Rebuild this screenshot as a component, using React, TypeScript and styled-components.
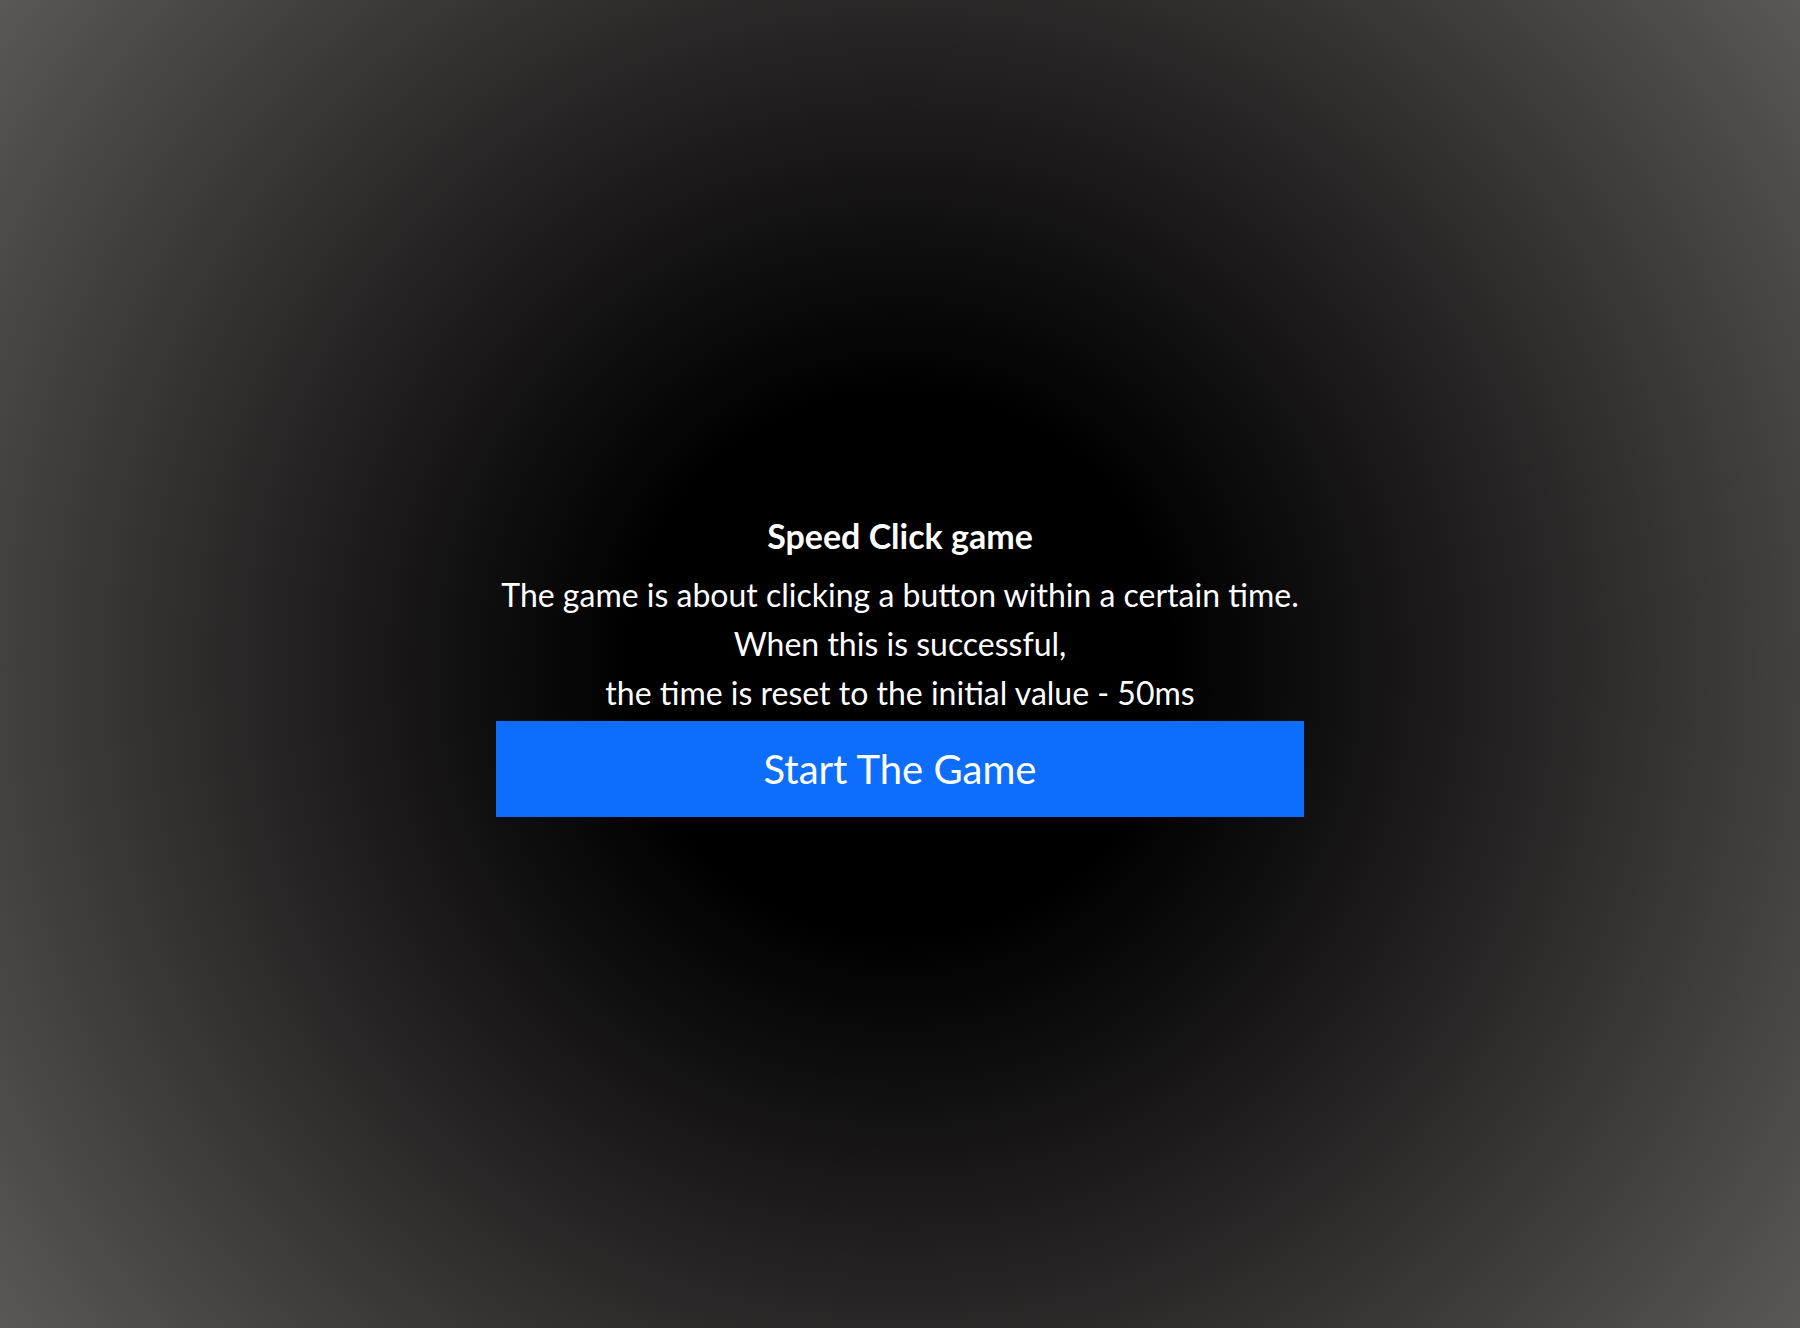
import React from "react";
import styled, { createGlobalStyle } from "styled-components";

const GlobalStyle = createGlobalStyle`
    html, body {
        margin: 0;
        padding: 0;
    }
    body {
        font-family: Lato, "Noto Sans", "Liberation Sans", sans-serif;
        color: #fff;
    }
`;

const Page = styled.main`
    min-height: 100vh;
    display: flex;
    align-items: center;
    justify-content: center;
    background: radial-gradient(circle at center, #000 24%, #1e1c1c 50%, #5b5757 100%);
`;

const Panel = styled.section`
    width: 808px;
    display: flex;
    flex-direction: column;
    align-items: stretch;
    text-align: center;
`;

const Title = styled.h1`
    margin: 0 0 10px;
    font-size: 34px;
    line-height: 48px;
    font-weight: 700;
`;

const Line = styled.p`
    margin: 0;
    font-size: 32px;
    line-height: 49px;
    font-weight: 400;
    white-space: nowrap;
`;

const StartButton = styled.button`
    margin-top: 4px;
    height: 96px;
    width: 100%;
    border: none;
    border-radius: 0;
    background: #0d6efd;
    color: #fff;
    font-family: inherit;
    font-size: 40px;
    cursor: pointer;
`;

const App = () => {
    return (
        <>
            <GlobalStyle />
            <Page>
                <Panel>
                    <Title>Speed Click game</Title>
                    <Line>The game is about clicking a button within a certain time.</Line>
                    <Line>When this is successful,</Line>
                    <Line>the time is reset to the initial value - 50ms</Line>
                    <StartButton>Start The Game</StartButton>
                </Panel>
            </Page>
        </>
    );
};

export default App;
